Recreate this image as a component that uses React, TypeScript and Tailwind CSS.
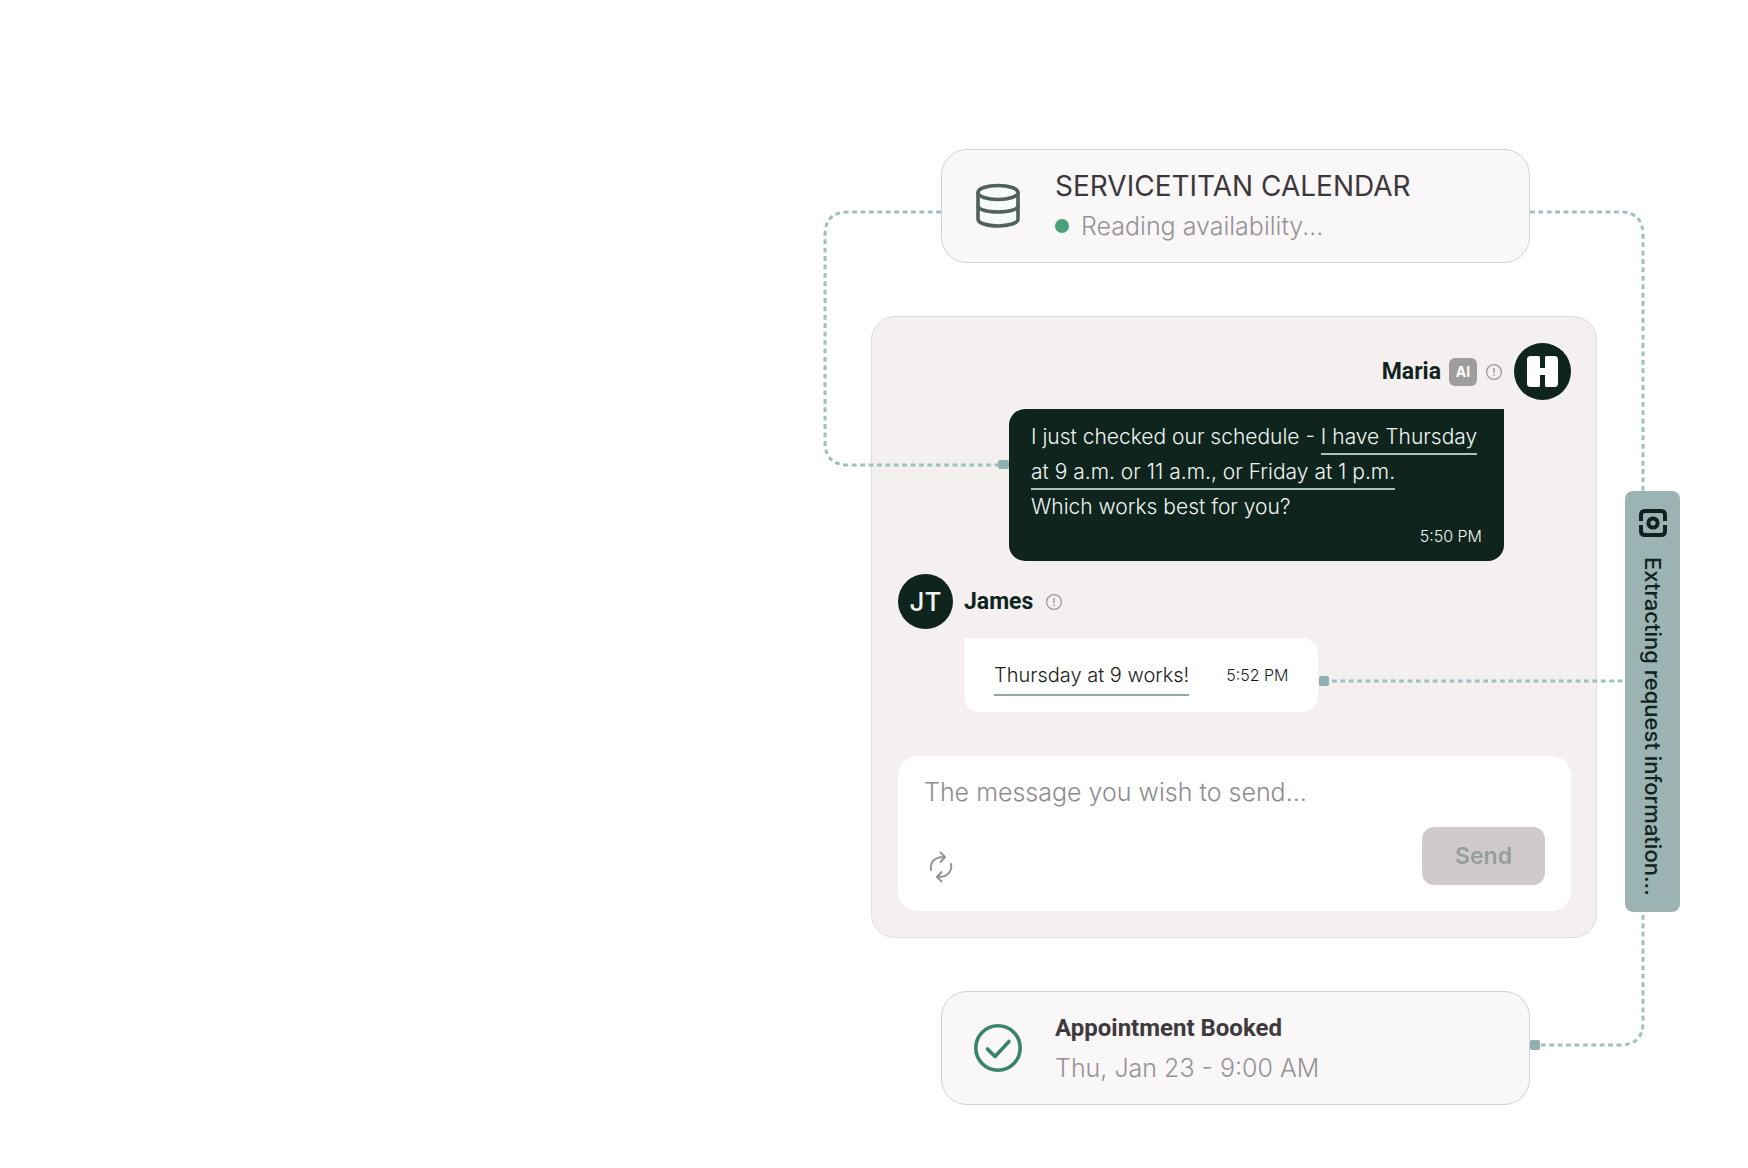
import type { ReactNode } from 'react';

export default function App() {
  return (
    <main className="flex min-h-screen items-start justify-end bg-white pt-[149px] pr-[68px] font-['Inter',sans-serif] text-[#10241e]">
      <div className="relative grid grid-cols-[726px_55px] gap-x-7 gap-y-[53px] pl-[47px]">
        <StatusCard icon={<DatabaseIcon />}>
          <h2 className="text-[28px] leading-10 font-normal text-[#3c373b]">SERVICETITAN CALENDAR</h2>
          <p className="flex items-center gap-3 text-[25px] leading-10 font-[350] text-[#969296]">
            <span className="size-3.5 rounded-full bg-[#4ba07c]" />
            Reading availability...
          </p>
        </StatusCard>

        <ChatPanel />

        <aside className="mb-[26px] flex flex-col items-center gap-[19px] self-end rounded-lg bg-[#9bb3b3] pt-[17px] pb-4">
          <ScanIcon />
          <p className="text-[22px] leading-7 font-medium [writing-mode:vertical-rl]">
            Extracting request information...
          </p>
        </aside>

        <StatusCard icon={<CheckIcon />}>
          <h2 className="font-['Roboto',sans-serif] text-2xl leading-10 font-bold text-[#3f3a3d]">
            Appointment Booked
          </h2>
          <p className="text-[25px] leading-10 font-[350] text-[#969296]">Thu, Jan 23 - 9:00 AM</p>
        </StatusCard>

        <Connectors />
      </div>
    </main>
  );
}

function StatusCard({ icon, children }: { icon: ReactNode; children: ReactNode }) {
  return (
    <section className="col-start-1 ml-[70px] flex h-[114px] w-[589px] items-center gap-[33px] rounded-[26px] border border-[#d2d3d6] bg-[#faf7f9] px-8">
      {icon}
      <div>{children}</div>
    </section>
  );
}

function ChatPanel() {
  return (
    <section className="col-start-1 rounded-3xl border border-[#dfdcdd] bg-[#f4f0f0] py-[26px] pr-[25px] pl-[26px]">
      <header className="flex items-center justify-end">
        <Name>Maria</Name>
        <span className="ml-2 flex size-7 items-center justify-center rounded-md bg-[#9e9d9b] text-sm font-bold text-white">
          AI
        </span>
        <InfoButton className="ml-2" label="About Maria" />
        <span className="ml-[11px] flex size-[57px] items-center justify-center rounded-full bg-[#10241e]">
          <LogoIcon />
        </span>
      </header>

      <div className="mt-[9px] mr-[67px] ml-auto w-[495px] rounded-2xl rounded-tr-none bg-[#10241e] px-[22px] pt-2.5 pb-[13px] text-[#eef5f1]">
        <p className="text-[21px] leading-[35px] font-light">
          I just checked our schedule -{' '}
          <span className="border-b-2 border-[#a9c2bd] pb-1">
            I have Thursday
            <br />
            at 9 a.m. or 11 a.m., or Friday at 1 p.m.
          </span>
          <br />
          Which works best for you?
        </p>
        <time className="block text-right text-base leading-6 font-[350]">5:50 PM</time>
      </div>

      <header className="mt-[13px] flex items-center">
        <span className="mr-[11px] flex size-[55px] items-center justify-center rounded-full bg-[#10241e] text-[26px] font-medium text-[#eef5f1]">
          JT
        </span>
        <Name>James</Name>
        <InfoButton className="ml-3" label="About James" />
      </header>

      <div className="mt-[9px] ml-[66px] flex h-[74px] w-fit items-center gap-[37px] rounded-2xl rounded-tl-none bg-white px-[30px] text-[#1b1a20]">
        <p className="text-xl leading-[35px] font-[350]">
          <span className="border-b-2 border-[#8fabaa] pb-[7px]">Thursday at 9 works!</span>
        </p>
        <time className="text-base font-[350]">5:52 PM</time>
      </div>

      <form
        className="mt-11 rounded-[20px] bg-white px-[26px] pt-5 pb-[26px]"
        onSubmit={(e) => e.preventDefault()}
      >
        <textarea
          rows={1}
          aria-label="Message"
          placeholder="The message you wish to send..."
          className="block w-full resize-none overflow-hidden text-[25px] leading-8 font-light outline-none placeholder:text-[#8f8b8f]"
        />
        <div className="mt-[19px] flex items-end justify-between">
          <button type="button" aria-label="Regenerate" className="mb-0.5 ml-0.5">
            <RefreshIcon />
          </button>
          <button
            type="submit"
            className="h-[58px] w-[123px] rounded-xl bg-[#cfcbca] text-[23px] font-semibold text-[#989d9a]"
          >
            Send
          </button>
        </div>
      </form>
    </section>
  );
}

function Name({ children }: { children: ReactNode }) {
  return <h3 className="font-['Roboto',sans-serif] text-[23px] leading-8 font-bold">{children}</h3>;
}

function InfoButton({ className, label }: { className: string; label: string }) {
  return (
    <button type="button" aria-label={label} className={className}>
      <svg className="size-[18px]" viewBox="0 0 18 18" fill="none" stroke="#99968f">
        <circle cx="9" cy="9" r="7.4" strokeWidth="1.2" />
        <path d="M9 5v5M9 11.6v1.4" strokeWidth="1.4" />
      </svg>
    </button>
  );
}

function LogoIcon() {
  return (
    <svg className="size-[31px]" viewBox="0 0 31 31" fill="#fff">
      <path d="M3.500 0H11.500Q13 0 13 1.500V12H18V1.500Q18 0 19.500 0H27.500Q31 0 31 3.500V27.500Q31 31 27.500 31H19.500Q18 31 18 29.500V19H13V29.500Q13 31 11.500 31H3.500Q0 31 0 27.500V3.500Q0 0 3.500 0Z" />
    </svg>
  );
}

function DatabaseIcon() {
  return (
    <svg className="size-12 shrink-0" viewBox="0 0 48 48" fill="#f6faf8" stroke="#50605b" strokeWidth="3.6">
      <path d="M4 10.500V37c0 4.200 9 7 20 7s20-2.800 20-7V10.500" />
      <ellipse cx="24" cy="10.500" rx="20" ry="7" />
      <path d="M4 23.500c0 4.200 9 6.500 20 6.500s20-2.300 20-6.500" fill="none" />
    </svg>
  );
}

function CheckIcon() {
  return (
    <svg className="size-12 shrink-0" viewBox="0 0 48 48" fill="none" stroke="#38836a" strokeWidth="3.6">
      <circle cx="24" cy="24" r="22.200" fill="#faf9f7" />
      <path d="M13.500 25l7.500 7.500L35 17.500" strokeLinecap="round" strokeLinejoin="round" />
    </svg>
  );
}

function ScanIcon() {
  return (
    <svg className="size-[30px]" viewBox="0 0 30 30" fill="none" stroke="#0e231e" strokeWidth="4">
      <path d="M3 13V7q0-4 4-4h16q4 0 4 4v6M3 17v6q0 4 4 4h16q4 0 4-4v-6" />
      <circle cx="15" cy="15" r="4.600" />
    </svg>
  );
}

function RefreshIcon() {
  return (
    <svg
      className="h-8 w-[30px]"
      viewBox="0 0 30 32"
      fill="none"
      stroke="#969296"
      strokeWidth="2"
      strokeLinecap="round"
      strokeLinejoin="round"
    >
      <path d="M5 19C3.500 11.500 9 5.500 18.500 6M14.500 1.500l4.500 4.500l-4.500 5" />
      <path d="M25 13c1.500 7.500-4 13.500-13.500 13M15.500 30.500L11 26l4.500-5" />
    </svg>
  );
}

/** Dashed wires from the cards to the messages they relate to. */
function Connectors() {
  return (
    <svg className="pointer-events-none absolute inset-0 size-full overflow-visible" fill="none">
      <g stroke="#9dc2bd" strokeWidth="3" strokeDasharray="4.800 3.600">
        <path d="M117 63H24Q1 63 1 86V293Q1 316 24 316H174" />
        <path d="M706 63H796Q819 63 819 86V342" />
        <path d="M819 766V873Q819 896 796 896H716" />
        <path d="M508 532H801" />
      </g>
      <g fill="#91b0b2">
        <rect x="174" y="311" width="11" height="9" rx="2" />
        <rect x="495" y="527" width="10" height="10" rx="2" />
        <rect x="706" y="891" width="10" height="10" rx="2" />
      </g>
    </svg>
  );
}
